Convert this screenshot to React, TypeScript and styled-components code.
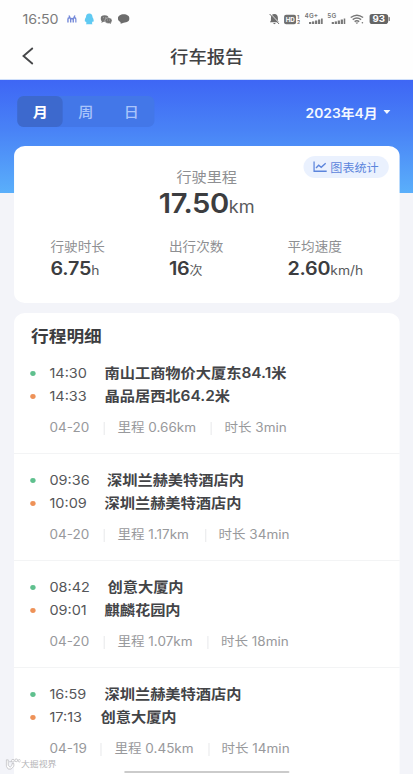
import React from "react";
import styled, { createGlobalStyle } from "styled-components";

/* The display is slightly wider than the layout's own units. */
const STRETCH = 1.08;
const sx = (n: number) => `${(n / STRETCH).toFixed(3)}px`;

const GlobalStyle = createGlobalStyle`
  body { margin: 0; background: #f3f4f9; overflow: hidden; }
  * { box-sizing: border-box; }
`;

const Screen = styled.div`
  width: ${sx(413.5)};
  height: 774px;
  overflow: hidden;
  position: relative;
  transform: scaleX(${STRETCH});
  transform-origin: 0 0;
  background: #f3f4f9;
  color: #3c3d40;
  font-family: Inter, "Noto Sans CJK SC", sans-serif;
  white-space: nowrap;
`;

const StatusBar = styled.header`
  height: 38px;
  padding: 0 ${sx(23.5)} 0 ${sx(22.5)};
  display: flex;
  align-items: center;
  justify-content: space-between;
  background: #fefefe;
`;

const StatusGroup = styled.div`
  display: flex;
  align-items: center;
`;

const Clock = styled.span`
  width: ${sx(44.5)};
  font-size: 13.2px;
  letter-spacing: -0.1px;
  color: #7b7b7b;
`;

const Icon = styled.svg<{ $w: number; $h: number; $gap?: number }>`
  display: block;
  flex: none;
  width: ${(p) => sx(p.$w)};
  height: ${(p) => p.$h}px;
  margin-left: ${(p) => sx(p.$gap ?? 0)};
`;

const TitleBar = styled.div`
  height: 42px;
  padding-left: ${sx(20)};
  display: grid;
  grid-template-columns: ${sx(40)} 1fr ${sx(60)};
  align-items: center;
  background: #fefefe;
  border-bottom: 1px solid #cfdffa;
`;

const Title = styled.h1`
  margin: 0;
  padding-bottom: 4px;
  text-align: center;
  font-size: 17px;
  line-height: 24px;
  font-weight: 500;
  color: #414244;
`;

const BackButton = styled.button`
  padding: 0 0 5px;
  border: 0;
  background: none;
`;

const Hero = styled.div`
  height: 113px;
  padding: 16px ${sx(23)} 0 ${sx(17.5)};
  display: flex;
  justify-content: space-between;
  align-items: flex-start;
  background: linear-gradient(#3e66f5 0, #4983f6 45%, #5aaffb 100%);
`;

const Tabs = styled.div`
  display: flex;
  height: 31px;
  border-radius: 6px;
  background: #4377e8;
`;

const Tab = styled.button<{ $active?: boolean }>`
  width: ${sx(45.5)};
  padding: 0 0 2px;
  border: 0;
  border-radius: 6px;
  font: ${(p) => (p.$active ? 700 : 500)} 14px "Noto Sans CJK SC", sans-serif;
  color: ${(p) => (p.$active ? "#fff" : "#a9c4fb")};
  background: ${(p) => (p.$active ? "#3d69cd" : "transparent")};
`;

const MonthPicker = styled.div`
  display: flex;
  align-items: center;
  height: 31px;
  padding-top: 1px;
  font-size: 12.8px;
  font-weight: 600;
  color: #f4f8ff;
`;

const Card = styled.section`
  margin: 0 ${sx(13.5)};
  border-radius: 10px;
  background: #fff;
`;

const Summary = styled(Card)`
  position: relative;
  height: 157px;
  margin-top: -47px;
  padding-top: 22px;
`;

const ChartButton = styled.button`
  position: absolute;
  top: 10px;
  right: ${sx(11.5)};
  width: ${sx(85)};
  height: 22px;
  padding: 0 0 1px;
  border: 0;
  border-radius: 11px;
  display: flex;
  align-items: center;
  justify-content: center;
  gap: ${sx(3)};
  background: #eaf1fe;
  color: #5c85dc;
  font: 400 11.2px "Noto Sans CJK SC", sans-serif;
`;

const Label = styled.div<{ $size?: number }>`
  font-size: ${(p) => p.$size ?? 12.6}px;
  line-height: 18px;
  color: #8e8f92;
`;

const Total = styled.div`
  text-align: center;
`;

const Value = styled.div<{ $large?: boolean }>`
  display: flex;
  align-items: baseline;
  justify-content: ${(p) => (p.$large ? "center" : "flex-start")};
  font-size: ${(p) => (p.$large ? 27 : 18.3)}px;
  line-height: ${(p) => (p.$large ? 36 : 24)}px;
  font-weight: 600;
  letter-spacing: ${(p) => (p.$large ? -0.4 : -0.2)}px;
`;

const Unit = styled.span<{ $size: number }>`
  font-size: ${(p) => p.$size}px;
  font-weight: 400;
  letter-spacing: 0;
  color: #58595c;
`;

const Stats = styled.div`
  display: grid;
  grid-template-columns: ${sx(118.5)} ${sx(118.5)} 1fr;
  padding: 13px 0 0 ${sx(37)};
`;

const Details = styled(Card)`
  margin-top: 10px;
  height: 470px;
`;

const SectionTitle = styled.h2`
  margin: 0;
  padding: 11px 0 0 ${sx(17.5)};
  height: 34px;
  font-size: 16.4px;
  line-height: 25px;
  font-weight: 600;
`;

const Trip = styled.article`
  height: 107px;
  padding: 15px 0 0 ${sx(16.5)};
  border-bottom: 1px solid #f3f4f5;
`;

const Stop = styled.div`
  display: flex;
  align-items: center;
  height: 23px;
`;

const Dot = styled.i<{ $end?: boolean }>`
  width: ${sx(6)};
  height: 5.5px;
  border-radius: 50%;
  margin-right: ${sx(13.5)};
  background: ${(p) => (p.$end ? "#ee9258" : "#5fc08e")};
`;

const Time = styled.time<{ $w: number }>`
  width: ${(p) => sx(p.$w)};
  padding-bottom: 1px;
  font-size: 13.4px;
  color: #555659;
`;

const Place = styled.span`
  padding-bottom: 3px;
  font-size: 14.1px;
  font-weight: 600;
  color: #434447;
`;

const PlaceNumber = styled.span`
  font-size: 14.3px;
  font-weight: 600;
`;

const Meta = styled.div`
  display: flex;
  align-items: center;
  height: 16px;
  margin: 12px 0 0 ${sx(19.5)};
  font-size: 12.5px;
  color: #98999c;
`;

const MetaCell = styled.span<{ $w?: number }>`
  width: ${(p) => (p.$w ? sx(p.$w) : "auto")};
  height: 13px;
  line-height: 12px;
  & + & {
    border-left: 1px solid #e9eaec;
    padding-left: ${sx(12.5)};
  }
`;

const HomeIndicator = styled.div`
  position: absolute;
  left: ${sx(124)};
  top: 770.5px;
  width: ${sx(165)};
  height: 2.5px;
  border-radius: 2px;
  background: #cbcbcb;
`;

const Watermark = styled.div`
  position: absolute;
  left: ${sx(5)};
  top: 757px;
  display: flex;
  align-items: center;
  font-size: 8.2px;
  line-height: 14px;
  color: #b4b4b7;
`;

const SignalBars = ({ x }: { x: number }) => (
  <>
    <rect x={x} y="9" width="2.2" height="2" />
    <rect x={x + 3} y="8.4" width="2.2" height="2.6" />
    <rect x={x + 6} y="7.5" width="2.2" height="3.5" />
    <rect x={x + 9} y="6.5" width="2.2" height="4.5" />
    <rect x={x + 12} y="5.5" width="1.7" height="5.5" />
  </>
);

const Status = () => (
  <StatusBar>
    <StatusGroup>
      <Clock>16:50</Clock>
      <Icon $w={10} $h={8} viewBox="0 0 10 8" preserveAspectRatio="none" fill="none" stroke="#7388d8" strokeWidth="1.4">
        <path d="M1 7.5V4.2Q1 2.8 2.3 2.8Q3.7 2.8 3.7 4.2V7.5M3.7 4.5Q5 2.5 6.3 4.5M6.3 7.5V4.2Q6.3 2.8 7.6 2.8Q9 2.8 9 4.2V7.5M2 .5L3 2.5M8 .5L7 2.5" />
      </Icon>
      <Icon $gap={7.5} $w={10} $h={12} viewBox="0 0 10 12" preserveAspectRatio="none" fill="#60caf2">
        <path d="M5 .5C7.2 .5 8.3 2 8.3 4.2C9.2 5.5 9.9 7.5 9.2 8.8L8.4 8.4L7.7 10L8.3 11.3H1.7L2.3 10L1.6 8.4L.8 8.8C.1 7.5 .8 5.5 1.7 4.2C1.7 2 2.8 .5 5 .5Z" />
      </Icon>
      <Icon $gap={6.5} $w={11.5} $h={9} viewBox="0 0 11.5 9" preserveAspectRatio="none" fill="#737373">
        <ellipse cx="4.2" cy="3.5" rx="4" ry="3.2" />
        <path d="M1.5 5.5L1 8L4 6Z" />
        <ellipse cx="8" cy="5.6" rx="3.6" ry="2.9" stroke="#fefefe" strokeWidth=".4" />
        <path d="M8.5 7.8L10.6 8.9L10.2 7Z" />
        <g fill="#ddd"><circle cx="2.9" cy="2.8" r=".45" /><circle cx="5.4" cy="2.8" r=".45" /><circle cx="6.9" cy="5" r=".4" /><circle cx="9.1" cy="5" r=".4" /></g>
      </Icon>
      <Icon $gap={5} $w={12} $h={10} viewBox="0 0 12 10" preserveAspectRatio="none" fill="#6c6c6c">
        <path d="M6 .3C9.3.3 11.8 2 11.8 4.6S9.3 8.7 6 8.7L3 9.8L2.7 8C1 7.2.2 6 .2 4.6C.2 2 2.7.3 6 .3Z" />
      </Icon>
    </StatusGroup>
    <StatusGroup>
      <Icon $w={11} $h={12} viewBox="0 0 11 12" preserveAspectRatio="none" fill="#6e6e6e">
        <path d="M5.5 1C8 1 9 3 9 5V7.5L10 9.3H1L2 7.5V5C2 3 3 1 5.5 1ZM4 10H7L5.5 11.3Z" />
        <path d="M1.6 1L11 10.6" stroke="#fefefe" strokeWidth="1" />
        <path d="M.7 1L10.2 11" stroke="#6e6e6e" strokeWidth="1" />
      </Icon>
      <Icon $gap={3.5} $w={17} $h={11} viewBox="0 0 17 11" preserveAspectRatio="none" fill="#707070" fontFamily="Inter" fontWeight="700">
        <rect x="0" y=".7" width="12" height="9.6" rx="2" />
        <text x="1.6" y="8" fontSize="6.2" fill="#fff">HD</text>
        <text x="13" y="4.6" fontSize="5.2">1</text>
        <text x="13" y="10.3" fontSize="5.2">2</text>
      </Icon>
      <Icon $gap={3.5} $w={19} $h={12} viewBox="0 0 19 12" preserveAspectRatio="none" fill="#777" fontFamily="Inter" fontWeight="600">
        <text x="0" y="5.2" fontSize="6.4" textLength="13.5">4G+</text>
        <SignalBars x={4.5} />
      </Icon>
      <Icon $gap={4} $w={19} $h={12} viewBox="0 0 19 12" preserveAspectRatio="none" fill="#777" fontFamily="Inter" fontWeight="600">
        <text x="0" y="5.2" fontSize="6.4" textLength="9">5G</text>
        <SignalBars x={4.5} />
      </Icon>
      <Icon $gap={4} $w={15} $h={11} viewBox="0 0 15 11" preserveAspectRatio="none" fill="none" stroke="#777" strokeWidth="1.5">
        <path d="M.8 3.5Q7 -1.2 13.2 3.5M2.8 5.6Q7 2.4 11.2 5.6M4.7 7.6Q7 5.8 9.3 7.6" />
        <path d="M5.5 8.4H8.5L7 10Z" fill="#777" stroke="none" />
        <circle cx="12.5" cy="8.8" r=".8" fill="#777" stroke="none" />
      </Icon>
      <Icon $gap={4} $w={21} $h={10} viewBox="0 0 21 10" preserveAspectRatio="none" fill="#656565">
        <rect width="18.8" height="10" rx="2.8" />
        <rect x="19.3" y="3" width="1.2" height="4" rx=".6" />
        <text x="3.2" y="8.2" fontFamily="Inter" fontWeight="700" fontSize="9" textLength="12.5" lengthAdjust="spacingAndGlyphs" fill="#fff">93</text>
      </Icon>
    </StatusGroup>
  </StatusBar>
);

interface StopData { time: string; w: number; place: string; number?: string; suffix?: string }
interface TripData { from: StopData; to: StopData; date: string; dateW: number; distance: string; distW: number; duration: string }

const HOTEL = "深圳兰赫美特酒店内";
const trips: TripData[] = [
  {
    from: { time: "14:30", w: 55, place: "南山工商物价大厦东", number: "84.1", suffix: "米" },
    to: { time: "14:33", w: 55, place: "晶品居西北", number: "64.2", suffix: "米" },
    date: "04-20", dateW: 54.5, distance: "0.66km", distW: 107, duration: "3min",
  },
  {
    from: { time: "09:36", w: 57.5, place: HOTEL },
    to: { time: "10:09", w: 55, place: HOTEL },
    date: "04-20", dateW: 54.5, distance: "1.17km", distW: 101, duration: "34min",
  },
  {
    from: { time: "08:42", w: 58, place: "创意大厦内" },
    to: { time: "09:01", w: 55, place: "麒麟花园内" },
    date: "04-20", dateW: 54.5, distance: "1.07km", distW: 103.5, duration: "18min",
  },
  {
    from: { time: "16:59", w: 55, place: HOTEL },
    to: { time: "17:13", w: 51, place: "创意大厦内" },
    date: "04-19", dateW: 51.5, distance: "0.45km", distW: 107, duration: "14min",
  },
];

const StopRow = ({ stop, end }: { stop: StopData; end?: boolean }) => (
  <Stop>
    <Dot $end={end} />
    <Time $w={stop.w}>{stop.time}</Time>
    <Place>
      {stop.place}
      {stop.number && <PlaceNumber>{stop.number}</PlaceNumber>}
      {stop.suffix}
    </Place>
  </Stop>
);

export default function App() {
  return (
    <>
      <GlobalStyle />
      <Screen>
        <Status />
        <TitleBar>
          <BackButton aria-label="返回">
            <Icon $w={14} $h={18} viewBox="0 0 14 18" preserveAspectRatio="none" fill="none" stroke="#47484a" strokeWidth="1.9">
              <path d="M12.3 1L3 9L12.3 17" />
            </Icon>
          </BackButton>
          <Title>行车报告</Title>
        </TitleBar>
        <Hero>
          <Tabs>
            <Tab $active>月</Tab>
            <Tab>周</Tab>
            <Tab>日</Tab>
          </Tabs>
          <MonthPicker>
            2023年4月
            <Icon $gap={6} $w={7} $h={4} viewBox="0 0 7 4" preserveAspectRatio="none" fill="#f4f8ff">
              <path d="M0 0H7L3.5 4Z" />
            </Icon>
          </MonthPicker>
        </Hero>
        <Summary>
          <ChartButton>
            <Icon $w={14} $h={11} viewBox="0 0 14 11" preserveAspectRatio="none" fill="none" stroke="#5c85dc" strokeWidth="1.4">
              <path d="M.8 .5V10.2H13.5M2.8 7L5.5 4.3L8 6.3L12.5 2.3" />
            </Icon>
            图表统计
          </ChartButton>
          <Total>
            <Label $size={14}>行驶里程</Label>
            <Value $large>17.50<Unit $size={16.8}>km</Unit></Value>
          </Total>
          <Stats>
            <div><Label>行驶时长</Label><Value>6.75<Unit $size={12.8}>h</Unit></Value></div>
            <div><Label>出行次数</Label><Value>16<Unit $size={12}>次</Unit></Value></div>
            <div><Label>平均速度</Label><Value>2.60<Unit $size={12.8}>km/h</Unit></Value></div>
          </Stats>
        </Summary>
        <Details>
          <SectionTitle>行程明细</SectionTitle>
          {trips.map((t) => (
            <Trip key={t.from.time}>
              <StopRow stop={t.from} />
              <StopRow stop={t.to} end />
              <Meta>
                <MetaCell $w={t.dateW}>{t.date}</MetaCell>
                <MetaCell $w={t.distW}>里程 {t.distance}</MetaCell>
                <MetaCell>时长 {t.duration}</MetaCell>
              </Meta>
            </Trip>
          ))}
        </Details>
        <HomeIndicator />
        <Watermark>
          <Icon $w={16} $h={12} viewBox="0 0 17 13" preserveAspectRatio="none" fill="#fff" stroke="#bcbcbf" strokeWidth=".8">
            <path d="M1 2H3V8L5 10L7 8V6H9V9L6 12H3L1 9ZM4 4H7" />
            <circle cx="8" cy="3" r="1.5" /><circle cx="11.5" cy="2.5" r="1.5" /><circle cx="14.8" cy="3" r="1.3" />
          </Icon>
          大掘视界
        </Watermark>
      </Screen>
    </>
  );
}
